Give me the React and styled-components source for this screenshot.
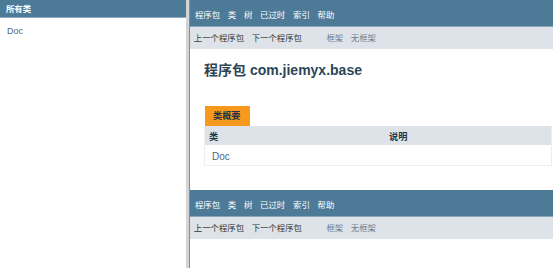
import React from 'react'
import styled, { createGlobalStyle } from 'styled-components'

const GlobalStyle = createGlobalStyle`
  html, body {
    margin: 0;
    padding: 0;
    background: #ffffff;
  }
  body {
    font-family: 'Liberation Sans', 'Noto Sans CJK SC', sans-serif;
    color: #353833;
  }
`

const topItems = ['程序包', '类', '树', '已过时', '索引', '帮助']

const NavBlock = () => (
  <>
    <TopNav>
      {topItems.map((t) => (
        <NavItem key={t}>{t}</NavItem>
      ))}
    </TopNav>
    <SubNav>
      <SubList>
        <SubItem>上一个程序包</SubItem>
        <SubItem>下一个程序包</SubItem>
      </SubList>
      <SubList>
        <SubItem link>框架</SubItem>
        <SubItem link>无框架</SubItem>
      </SubList>
    </SubNav>
  </>
)

export default function App() {
  return (
    <>
      <GlobalStyle />
      <Frameset>
        <LeftFrame>
          <Bar>所有类</Bar>
          <ClassLink>Doc</ClassLink>
        </LeftFrame>
        <Divider />
        <RightFrame>
          <NavBlock />
          <Title>程序包 com.jiemyx.base</Title>
          <Summary>
            <Tab>类概要</Tab>
            <Table>
              <HeadRow>
                <HeadCell first>类</HeadCell>
                <HeadCell>说明</HeadCell>
              </HeadRow>
              <BodyRow>
                <BodyCell first>
                  <TypeLink>Doc</TypeLink>
                </BodyCell>
                <BodyCell />
              </BodyRow>
            </Table>
          </Summary>
          <NavBlock />
        </RightFrame>
      </Frameset>
    </>
  )
}

const Frameset = styled.div`
  display: flex;
  height: 268px;
  overflow: hidden;
`

const LeftFrame = styled.div`
  width: 186px;
  flex-shrink: 0;
  background: #ffffff;
`

const Bar = styled.div`
  height: 17px;
  border-bottom: 1px solid #8fadc2;
  background: #4d7a97;
  color: #ffffff;
  font-size: 8.4px;
  font-weight: bold;
  line-height: 19px;
  padding-left: 6px;
`

const ClassLink = styled.div`
  padding: 7px 0 0 7px;
  font-size: 9px;
  line-height: 12px;
  color: #4a6782;
`

const Divider = styled.div`
  width: 3px;
  flex-shrink: 0;
  background: #d4d4d4;
  border-right: 1px solid #8c8c8c;
`

const RightFrame = styled.div`
  flex: 1;
  min-width: 0;
  overflow: hidden;
  background: #ffffff;
`

const TopNav = styled.div`
  display: flex;
  height: 27px;
  box-sizing: border-box;
  padding: 10px 0 0 1px;
  background: #4d7a97;
  border-bottom: 1px solid #88a7bd;
  color: #ffffff;
  font-size: 8.4px;
  line-height: 11px;
`

const NavItem = styled.span`
  padding: 0 3.9px;
`

const SubNav = styled.div`
  display: flex;
  align-items: center;
  height: 22px;
  background: #dee3e9;
  font-size: 8.4px;
  line-height: 11px;
`

const SubList = styled.div`
  display: flex;
  margin-right: 17px;
`

const SubItem = styled.span`
  padding: 0 3.8px;
  color: ${(p) => (p.link ? '#6b7f92' : '#353833')};
`

const Title = styled.h1`
  margin: 11px 0 0 14px;
  font-size: 14px;
  line-height: 20px;
  font-weight: bold;
  color: #2c4557;
`

const Summary = styled.div`
  margin: 25px 0 24px 14px;
`

const Tab = styled.div`
  display: inline-block;
  height: 20px;
  padding: 0 9px 0 8px;
  margin-left: 1px;
  background: #f8981d;
  color: #253441;
  font-size: 9.2px;
  font-weight: bold;
  line-height: 21px;
`

const Table = styled.div`
  border: 1px solid #eeeeee;
  border-top: none;
  width: 348px;
  box-sizing: border-box;
`

const HeadRow = styled.div`
  display: grid;
  grid-template-columns: 180px 1fr;
  height: 19px;
  background: #dee3e9;
  align-items: center;
`

const HeadCell = styled.div`
  padding-left: ${(p) => (p.first ? '4px' : '4px')};
  font-size: 9.2px;
  font-weight: bold;
  color: #253441;
`

const BodyRow = styled.div`
  display: grid;
  grid-template-columns: 180px 1fr;
  height: 20px;
  align-items: center;
  background: #ffffff;
`

const BodyCell = styled.div`
  padding-left: 7px;
`

const TypeLink = styled.span`
  font-size: 10px;
  color: #4a6782;
`
